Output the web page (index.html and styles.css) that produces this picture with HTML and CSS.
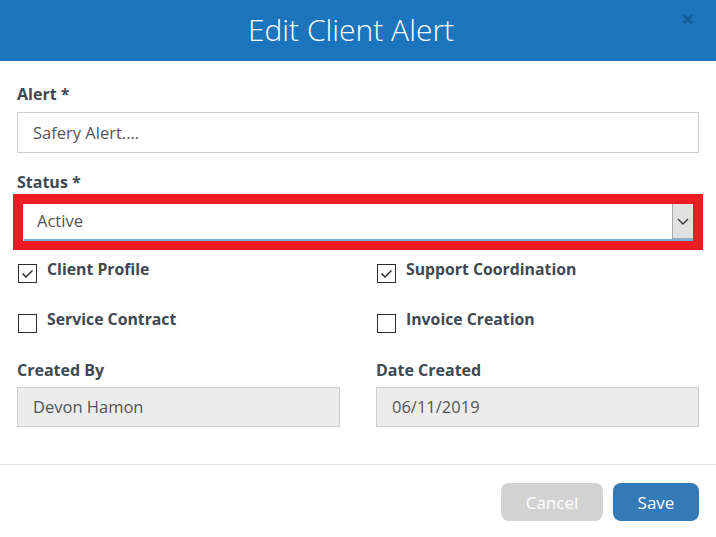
FILE: index.html
```html
<!DOCTYPE html>
<html lang="en">
<head>
<meta charset="utf-8">
<title>Edit Client Alert</title>
<link rel="stylesheet" href="styles.css">
</head>
<body>
<div class="modal">
  <header class="modal-header">
    <h1 class="modal-title">Edit Client Alert</h1>
    <span class="close">&times;</span>
  </header>
  <div class="modal-body">
    <div class="field">
      <label class="label">Alert *</label>
      <div class="input">Safery Alert....</div>
    </div>
    <div class="field field-status">
      <label class="label">Status *</label>
      <div class="highlight">
        <div class="select">
          <span class="select-value">Active</span>
          <span class="select-btn">
            <svg width="12" height="7" viewBox="0 0 12 7"><path d="M1 1 L6 6 L11 1" fill="none" stroke="#333" stroke-width="1.3"/></svg>
          </span>
        </div>
      </div>
    </div>
    <div class="checks">
      <div class="check"><span class="box checked"><svg width="17" height="17" viewBox="0 0 17 17"><path d="M3.5 8.5 L7 12 L13.5 5.5" fill="none" stroke="#222" stroke-width="1.4"/></svg></span><span class="check-label">Client Profile</span></div>
      <div class="check"><span class="box checked"><svg width="17" height="17" viewBox="0 0 17 17"><path d="M3.5 8.5 L7 12 L13.5 5.5" fill="none" stroke="#222" stroke-width="1.4"/></svg></span><span class="check-label">Support Coordination</span></div>
      <div class="check"><span class="box"></span><span class="check-label">Service Contract</span></div>
      <div class="check"><span class="box"></span><span class="check-label">Invoice Creation</span></div>
    </div>
    <div class="cols">
      <div class="field">
        <label class="label">Created By</label>
        <div class="input readonly">Devon Hamon</div>
      </div>
      <div class="field">
        <label class="label">Date Created</label>
        <div class="input readonly">06/11/2019</div>
      </div>
    </div>
  </div>
  <footer class="modal-footer">
    <button class="btn btn-cancel">Cancel</button>
    <button class="btn btn-save">Save</button>
  </footer>
</div>
</body>
</html>
```

FILE: styles.css
```css
html, body {
  margin: 0;
  padding: 0;
  background: #fff;
}
body {
  font-family: "Open Sans", "Liberation Sans", sans-serif;
  color: #404853;
}
.modal {
  width: 716px;
  height: 537px;
  background: #fff;
}
.modal-header {
  position: relative;
  height: 61px;
  background: #1c75bc;
  display: flex;
  align-items: center;
  justify-content: center;
  padding-right: 14px;
  box-sizing: border-box;
}
.modal-title {
  margin: 0;
  font-size: 30px;
  font-weight: 300;
  color: #fff;
  line-height: 40px;
  position: relative;
  top: -1px;
}
.close {
  position: absolute;
  right: 22px;
  top: 6px;
  font-size: 22px;
  font-weight: 700;
  line-height: 24px;
  color: #14568f;
  opacity: 0.85;
}
.modal-body {
  padding: 22px 17px 0;
}
.field {
  display: flex;
  flex-direction: column;
}
.label {
  font-size: 16px;
  font-weight: 700;
  line-height: 22px;
  margin-bottom: 7px;
  color: #404853;
}
.input {
  height: 41px;
  box-sizing: border-box;
  border: 1px solid #cfcfcf;
  padding: 0 15px;
  font-size: 16.5px;
  line-height: 39px;
  color: #555;
  background: #fff;
}
.input.readonly {
  background: #ececec;
  height: 40px;
  line-height: 38px;
}
.field-status {
  margin-top: 18px;
}
.field-status .label {
  margin-bottom: 1px;
}
.highlight {
  margin: 0 -4px;
  border: 10px solid #ed1c24;
  border-bottom-width: 9px;
  background: #fff;
}
.select {
  display: flex;
  height: 37px;
  box-sizing: border-box;
  margin-left: 1px;
  border-bottom: 2px solid #72b1e2;
  padding-bottom: 1px;
}
.select-value {
  flex: 1;
  padding-left: 13px;
  font-size: 16.5px;
  line-height: 34px;
  color: #555;
}
.select-btn {
  width: 21px;
  box-sizing: border-box;
  background: #e1e1e1;
  border-left: 1px solid #a9a9a9;
  border-bottom: 1px solid #a9a9a9;
  display: flex;
  align-items: center;
  justify-content: center;
  margin-bottom: -1px;
}
.checks {
  display: grid;
  grid-template-columns: 1fr 1fr;
  column-gap: 36px;
  row-gap: 25px;
  margin-top: 8px;
}
.check {
  display: flex;
  align-items: flex-start;
  gap: 10px;
  padding-left: 1px;
}
.box {
  width: 19px;
  height: 19px;
  box-sizing: border-box;
  border: 1.5px solid #2a2a2a;
  margin-top: 6px;
  display: flex;
  align-items: center;
  justify-content: center;
  flex: none;
}
.check-label {
  font-size: 15.8px;
  font-weight: 700;
  line-height: 22px;
  color: #404853;
}
.cols {
  display: grid;
  grid-template-columns: 1fr 1fr;
  column-gap: 36px;
  margin-top: 26px;
}
.cols .label {
  margin-bottom: 6px;
}
.modal-footer {
  margin-top: 37px;
  border-top: 1px solid #e5e5e5;
  padding: 18px 17px 0;
  display: flex;
  justify-content: flex-end;
  gap: 10px;
}
.btn {
  height: 38px;
  border: none;
  border-radius: 8px;
  font-family: "Open Sans", "Liberation Sans", sans-serif;
  font-size: 17px;
  color: #fff;
  padding: 0;
}
.btn-cancel {
  width: 102px;
  background: #d3d3d3;
}
.btn-save {
  width: 86px;
  background: #337ab7;
}
```
